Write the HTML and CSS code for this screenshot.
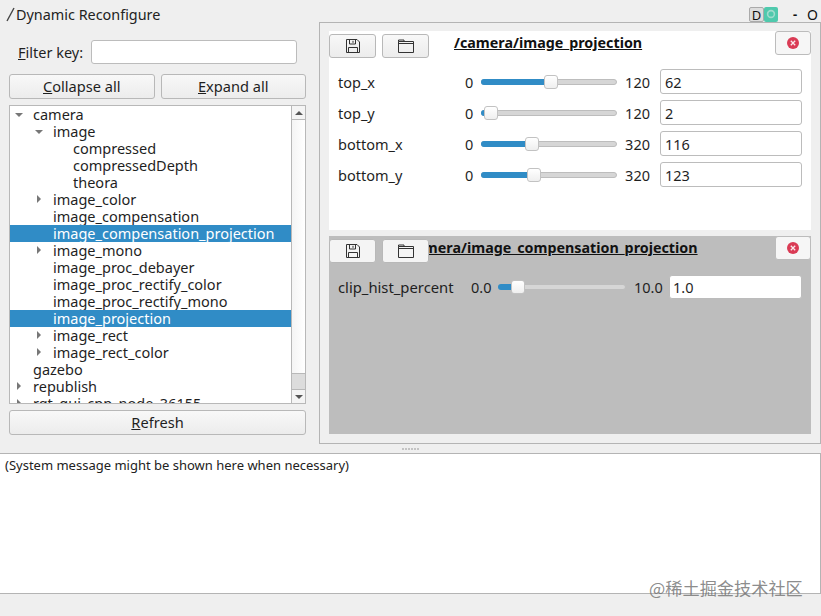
FILE: index.html
```html
<!DOCTYPE html>
<html lang="en">
<head>
    <meta charset="UTF-8">
    <title>Dynamic Reconfigure</title>
    <link rel="stylesheet" href="styles.css">
</head>
<body>
    <!-- Title bar -->
    <header class="titlebar">
        <svg class="title-icon" width="12" height="16" viewBox="0 0 12 16"><path d="M2 15 L9 2" stroke="#444" stroke-width="1.4" fill="none"/></svg>
        <span class="title-text">Dynamic Reconfigure</span>
        <span class="title-d">D</span>
        <span class="title-c"><svg width="10" height="10" viewBox="0 0 10 10"><circle cx="5" cy="5" r="3.4" fill="none" stroke="#9fdccd" stroke-width="1.6"/></svg></span>
        <span class="title-min">-</span>
        <span class="title-o">O</span>
    </header>

    <main class="top">
        <!-- Left column -->
        <section class="col-left">
            <div class="filter">
                <label class="filter-label"><u>F</u>ilter key:</label>
                <input class="field filter-input" type="text">
            </div>
            <div class="btn-row">
                <button class="btn"><u>C</u>ollapse all</button>
                <button class="btn"><u>E</u>xpand all</button>
            </div>
            <div class="tree">
                <ul class="tree-list">
                    <li class="row lv0"><i class="arrow arrow-down"></i>camera</li>
                    <li class="row lv1"><i class="arrow arrow-down"></i>image</li>
                    <li class="row lv2">compressed</li>
                    <li class="row lv2">compressedDepth</li>
                    <li class="row lv2">theora</li>
                    <li class="row lv1"><i class="arrow arrow-right"></i>image_color</li>
                    <li class="row lv1">image_compensation</li>
                    <li class="row lv1 selected">image_compensation_projection</li>
                    <li class="row lv1"><i class="arrow arrow-right"></i>image_mono</li>
                    <li class="row lv1">image_proc_debayer</li>
                    <li class="row lv1">image_proc_rectify_color</li>
                    <li class="row lv1">image_proc_rectify_mono</li>
                    <li class="row lv1 selected">image_projection</li>
                    <li class="row lv1"><i class="arrow arrow-right"></i>image_rect</li>
                    <li class="row lv1"><i class="arrow arrow-right"></i>image_rect_color</li>
                    <li class="row lv0">gazebo</li>
                    <li class="row lv0"><i class="arrow arrow-right"></i>republish</li>
                    <li class="row lv0"><i class="arrow arrow-right"></i>rqt_gui_cpp_node_36155</li>
                </ul>
                <div class="scrollbar">
                    <div class="sb-btn"><i class="sb-up"></i></div>
                    <div class="sb-track"><div class="sb-thumb"></div></div>
                    <div class="sb-btn sb-btn-end"><i class="sb-down"></i></div>
                </div>
            </div>
            <button class="btn btn-wide"><u>R</u>efresh</button>
        </section>

        <!-- Right column -->
        <section class="col-right">
            <div class="panel panel-white">
                <div class="panel-head">
                    <div class="tools">
                        <button class="tool"><svg width="16" height="16" viewBox="0 0 16 16"><path class="ico" d="M1.5 1.5 H12 L14.5 4 V14.5 H1.5 Z M4.5 1.5 V6 H10.5 V1.5 M8 2.8 V4.8 M3.5 14.5 V9.5 H12.5 V14.5"/></svg></button>
                        <button class="tool"><svg width="16" height="14" viewBox="0 0 16 14"><path class="ico" d="M.5 2.5 V13.5 H15.5 V2.5 Z M.5 4.5 H15.5 M.5 2.5 V1 H6 V2.5"/></svg></button>
                    </div>
                    <h2 class="panel-title title-first">/camera/image_projection</h2>
                    <button class="close"><svg width="12" height="12" viewBox="0 0 12 12"><circle cx="6" cy="6" r="6" fill="#da3b55"/><path d="M3.8 3.8 L8.2 8.2 M8.2 3.8 L3.8 8.2" stroke="#fbe8ec" stroke-width="1.3"/></svg></button>
                </div>
                <div class="param">
                    <span class="param-name">top_x</span><span class="min">0</span>
                    <div class="slider"><div class="fill" style="width: 51.5%"></div><div class="knob" style="left: 51.5%"></div></div>
                    <span class="max">120</span><input class="field value" value="62">
                </div>
                <div class="param">
                    <span class="param-name">top_y</span><span class="min">0</span>
                    <div class="slider"><div class="fill" style="width: 6.6%"></div><div class="knob" style="left: 6.6%"></div></div>
                    <span class="max">120</span><input class="field value" value="2">
                </div>
                <div class="param">
                    <span class="param-name">bottom_x</span><span class="min">0</span>
                    <div class="slider"><div class="fill" style="width: 37.5%"></div><div class="knob" style="left: 37.5%"></div></div>
                    <span class="max">320</span><input class="field value" value="116">
                </div>
                <div class="param">
                    <span class="param-name">bottom_y</span><span class="min">0</span>
                    <div class="slider"><div class="fill" style="width: 39%"></div><div class="knob" style="left: 39%"></div></div>
                    <span class="max">320</span><input class="field value" value="123">
                </div>
            </div>

            <div class="panel panel-grey">
                <div class="panel-head">
                    <div class="tools">
                        <button class="tool"><svg width="16" height="16" viewBox="0 0 16 16"><path class="ico" d="M1.5 1.5 H12 L14.5 4 V14.5 H1.5 Z M4.5 1.5 V6 H10.5 V1.5 M8 2.8 V4.8 M3.5 14.5 V9.5 H12.5 V14.5"/></svg></button>
                        <button class="tool"><svg width="16" height="14" viewBox="0 0 16 14"><path class="ico" d="M.5 2.5 V13.5 H15.5 V2.5 Z M.5 4.5 H15.5 M.5 2.5 V1 H6 V2.5"/></svg></button>
                    </div>
                    <h2 class="panel-title title-second">/camera/image_compensation_projection</h2>
                    <button class="close"><svg width="12" height="12" viewBox="0 0 12 12"><circle cx="6" cy="6" r="6" fill="#da3b55"/><path d="M3.8 3.8 L8.2 8.2 M8.2 3.8 L3.8 8.2" stroke="#fbe8ec" stroke-width="1.3"/></svg></button>
                </div>
                <div class="param">
                    <span class="param-name-long">clip_hist_percent</span><span class="min-float">0.0</span>
                    <div class="slider slider-float"><div class="fill" style="width: 15%"></div><div class="knob" style="left: 15%"></div></div>
                    <span class="max-float">10.0</span><input class="field value-float" value="1.0">
                </div>
            </div>
        </section>
    </main>

    <div class="splitter"><i></i><i></i><i></i><i></i><i></i><i></i></div>

    <div class="messages">(System message might be shown here when necessary)</div>

    <footer class="status">
        <span class="watermark">@稀土掘金技术社区</span>
    </footer>
</body>
</html>
```

FILE: styles.css
```css
/* Base */
html, body {
    margin: 0;
    padding: 0;
}
* {
    box-sizing: border-box;
}
body {
    width: 821px;
    height: 616px;
    overflow: hidden;
    display: flex;
    flex-direction: column;
    position: relative;
    background: #efefef;
    color: #1f1f1f;
    font-family: "Noto Sans", "Open Sans", sans-serif;
    font-size: 14px;
}

/* Title bar */
.titlebar {
    height: 22px;
    flex: none;
    display: flex;
    align-items: center;
    padding: 6px 0 0 5px;
}
.title-icon {
    margin-right: -1px;
}
.title-text {
    flex: 1;
    font-size: 14.4px;
    color: #222;
}
.title-d {
    width: 15px;
    height: 15px;
    line-height: 14px;
    text-align: center;
    font-size: 13px;
    border: 1px solid #aaa;
    border-radius: 2px;
    background: #ddd;
    color: #111;
}
.title-c {
    width: 14px;
    height: 15px;
    display: flex;
    align-items: center;
    justify-content: center;
    border-radius: 2px;
    background: #4fc9ad;
}
.title-min {
    margin-left: 15px;
    width: 10px;
    font-weight: bold;
    font-size: 13px;
    color: #111;
}
.title-o {
    margin-left: 4px;
    width: 14px;
    font-size: 14px;
    color: #111;
}

/* Layout */
.top {
    display: flex;
    height: 422px;
    flex: none;
}
.col-left {
    width: 319px;
    padding: 0 13px 0 9px;
    display: flex;
    flex-direction: column;
}
.col-right {
    width: 502px;
    border: 1px solid #b4b4b4;
    padding: 8px 9px 9px 9px;
    display: flex;
    flex-direction: column;
    gap: 6px;
}

/* Filter */
.filter {
    display: flex;
    align-items: center;
    height: 25px;
    margin-top: 17px;
    padding-left: 9px;
}
.filter-label {
    width: 73px;
    font-size: 14.5px;
}
.filter-input {
    width: 206px;
    height: 24px;
}
.field {
    border: 1px solid #bcbcbc;
    border-radius: 3px;
    background: #fff;
    color: #1f1f1f;
    font-family: inherit;
    font-size: 14.5px;
    padding: 0 2px;
    outline: none;
}

/* Buttons */
.btn-row {
    display: flex;
    gap: 6px;
    margin-top: 10px;
}
.btn {
    flex: 1;
    height: 25px;
    padding: 0 0 2px;
    border: 1px solid #b8b8b8;
    border-radius: 3px;
    background: linear-gradient(#f8f8f8, #ececec);
    color: #1f1f1f;
    font-family: inherit;
    font-size: 14.6px;
}
.btn-wide {
    flex: none;
    width: 100%;
    margin-top: 6px;
}

/* Tree */
.tree {
    height: 299px;
    margin-top: 6px;
    border: 1px solid #b8b8b8;
    background: #fff;
    display: flex;
    overflow: hidden;
}
.tree-list {
    flex: 1;
    list-style: none;
    margin: 0;
    padding: 0;
    overflow: hidden;
}
.row {
    height: 17px;
    line-height: 17px;
    position: relative;
    font-size: 14.5px;
    white-space: nowrap;
}
.lv0 { padding-left: 23px; }
.lv1 { padding-left: 43px; }
.lv2 { padding-left: 63px; }
.selected {
    background: #308cc6;
    color: #fff;
}
.arrow {
    position: absolute;
    width: 0;
    height: 0;
    border-style: solid;
    border-color: transparent;
}
.arrow-down {
    top: 7px;
    border-width: 4px 4px 0 4px;
    border-top-color: #777;
}
.lv0 .arrow-down { left: 5px; }
.lv1 .arrow-down { left: 25px; }
.arrow-right {
    top: 4px;
    border-width: 4px 0 4px 4px;
    border-left-color: #777;
}
.lv0 .arrow-right { left: 7px; }
.lv1 .arrow-right { left: 27px; }

/* Scrollbar */
.scrollbar {
    width: 14px;
    flex: none;
    border-left: 1px solid #b8b8b8;
    display: flex;
    flex-direction: column;
    background: #dcdcdc;
}
.sb-btn {
    height: 14px;
    flex: none;
    background: #f4f4f4;
    border-bottom: 1px solid #b8b8b8;
    display: flex;
    align-items: center;
    justify-content: center;
}
.sb-btn-end {
    border-bottom: none;
    border-top: 1px solid #b8b8b8;
}
.sb-up, .sb-down {
    width: 0;
    height: 0;
    border-style: solid;
    border-color: transparent;
}
.sb-up {
    border-width: 0 4px 4px 4px;
    border-bottom-color: #555;
}
.sb-down {
    border-width: 4px 4px 0 4px;
    border-top-color: #555;
}
.sb-track {
    flex: 1;
}
.sb-thumb {
    height: 254px;
    background: linear-gradient(90deg, #f4f4f4, #fff);
    border-bottom: 1px solid #b8b8b8;
}

/* Parameter panels */
.panel {
    height: 199px;
    padding: 0 9px;
}
.panel-white {
    background: #fff;
}
.panel-grey {
    flex: 1;
    background: #bdbdbd;
}
.panel-head {
    height: 38px;
    position: relative;
}
.tools {
    position: absolute;
    left: -9px;
    top: 3px;
    display: flex;
    gap: 6px;
    z-index: 1;
}
.tool {
    width: 47px;
    height: 24px;
    padding: 0;
    border: 1px solid #b8b8b8;
    border-radius: 3px;
    background: linear-gradient(#f8f8f8, #ececec);
    display: flex;
    align-items: center;
    justify-content: center;
}
.panel-grey .tool {
    background: #f4f4f4;
}
.ico {
    fill: none;
    stroke: #333;
    stroke-width: 1;
}
.panel-title {
    margin: 0;
    font-size: 14.3px;
    line-height: 18px;
    font-weight: bold;
    color: #111;
    text-decoration: underline;
    white-space: nowrap;
    position: absolute;
    top: 3px;
}
.title-first { left: 116px; }
.title-second { left: 64px; }
.close {
    position: absolute;
    right: -9px;
    top: 0;
    width: 36px;
    height: 24px;
    padding: 0;
    border: 1px solid #bcbcbc;
    border-radius: 3px;
    background: #f6f6f6;
    display: flex;
    align-items: center;
    justify-content: center;
}
.param {
    display: flex;
    align-items: center;
    height: 25px;
    margin-bottom: 6px;
    font-size: 14.5px;
}
.param-name {
    width: 127px;
}
.min {
    width: 16px;
}
.max {
    width: 43px;
    text-align: right;
    padding-right: 10px;
}
.value {
    width: 142px;
    height: 25px;
    padding-left: 4px;
}
.slider {
    position: relative;
    width: 136px;
    height: 6px;
    border-radius: 3px;
    border: 1px solid #bdbdbd;
    background: #d6d6d6;
}
.fill {
    height: 6px;
    margin: -1px 0 0 -1px;
    border-radius: 3px 0 0 3px;
    background: #308cc6;
}
.knob {
    position: absolute;
    top: -5px;
    width: 14px;
    height: 14px;
    margin-left: -7px;
    border: 1px solid #c2c2c2;
    border-radius: 3px;
    background: linear-gradient(#fff, #efefef);
}
.param-name-long {
    width: 133px;
    font-size: 14.8px;
}
.min-float {
    width: 27px;
}
.slider-float {
    width: 128px;
}
.max-float {
    width: 43px;
    padding-left: 8px;
    white-space: nowrap;
}
.value-float {
    width: 133px;
    height: 24px;
    padding-left: 3px;
}

/* Splitter */
.splitter {
    height: 9px;
    flex: none;
    display: flex;
    justify-content: center;
    align-items: center;
    gap: 1px;
}
.splitter i {
    width: 2px;
    height: 2px;
    background: #c4c4c4;
}

/* Message box */
.messages {
    height: 141px;
    flex: none;
    background: #fff;
    border-top: 1px solid #b4b4b4;
    border-bottom: 1px solid #b4b4b4;
    border-right: 1px solid #b4b4b4;
    padding: 2px 5px;
    font-size: 13px;
    color: #222;
}

/* Bottom bar */
.status {
    flex: 1;
}
.watermark {
    position: absolute;
    left: 649px;
    top: 577px;
    font-family: "Noto Sans CJK SC", "Noto Sans", sans-serif;
    font-size: 17.2px;
    line-height: 22px;
    color: rgba(110, 110, 110, 0.8);
}
```
